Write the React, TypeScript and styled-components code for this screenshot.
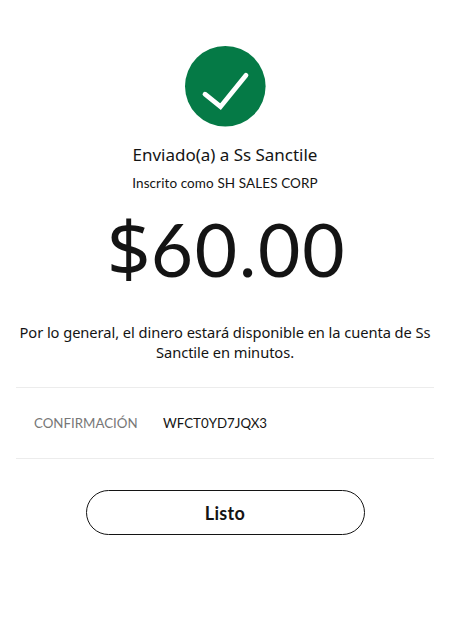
import React from 'react';
import styled, { createGlobalStyle } from 'styled-components';

const COLOR = {
  green: '#057a46',
  text: '#141414',
  gray: '#777777',
  line: '#ececec',
  bg: '#ffffff',
};

const GlobalStyle = createGlobalStyle`
  * {
    box-sizing: border-box;
    margin: 0;
    padding: 0;
  }
  body {
    background-color: ${COLOR.bg};
    color: ${COLOR.text};
    font-family: Lato, 'Noto Sans', sans-serif;
  }
`;

const PageWrapper = styled.main`
  width: 450px;
  height: 643px;
  display: flex;
  flex-direction: column;
  align-items: center;
  padding: 46px 16px 0;
  overflow: hidden;
`;

const CheckIcon = styled.svg`
  width: 81px;
  height: 81px;
  flex-shrink: 0;
`;

const Recipient = styled.h1`
  margin-top: 16px;
  font-family: 'Noto Sans', sans-serif;
  font-size: 17px;
  font-weight: 400;
  line-height: 24px;
  letter-spacing: -0.02px;
  white-space: nowrap;
`;

const Enrolled = styled.p`
  margin-top: 6px;
  font-size: 13.5px;
  line-height: 20px;
  letter-spacing: 0.1px;
  white-space: nowrap;
`;

const Amount = styled.p`
  height: 80px;
  margin-top: 15px;
  margin-left: 3px;
  display: flex;
  align-items: baseline;
  font-size: 73px;
  line-height: 80px;
  letter-spacing: 1.8px;
  white-space: nowrap;
`;

const Currency = styled.span`
  font-family: 'Noto Sans', sans-serif;
  font-size: 77px;
  letter-spacing: 0;
`;

const Notice = styled.p`
  margin-top: 34px;
  font-family: 'Noto Sans', sans-serif;
  font-size: 14.7px;
  line-height: 20px;
  letter-spacing: -0.07px;
  text-align: center;
  span {
    display: block;
    white-space: nowrap;
  }
`;

const Confirmation = styled.dl`
  width: 418px;
  height: 72px;
  margin-top: 25px;
  display: flex;
  align-items: center;
  padding-left: 18px;
  border-top: 1px solid ${COLOR.line};
  border-bottom: 1px solid ${COLOR.line};
  font-size: 13.3px;
  dt {
    width: 129px;
    color: ${COLOR.gray};
  }
`;

const DoneButton = styled.button`
  width: 279px;
  height: 45px;
  margin-top: 31px;
  border: 1px solid ${COLOR.text};
  border-radius: 23px;
  background-color: ${COLOR.bg};
  color: ${COLOR.text};
  font-family: inherit;
  font-size: 18px;
  font-weight: 700;
  letter-spacing: 0.3px;
`;

const App = () => {
  return (
    <>
      <GlobalStyle />
      <PageWrapper>
        <CheckIcon viewBox="0 0 81 81" fill="none">
          <circle cx="40.3" cy="40.3" r="40.3" fill={COLOR.green} />
          <path
            d="M20 48.2L35.5 60.7L61 29.3"
            stroke="#fff"
            strokeWidth="4.8"
            strokeLinecap="round"
            strokeLinejoin="miter"
          />
        </CheckIcon>
        <Recipient>Enviado(a) a Ss Sanctile</Recipient>
        <Enrolled>Inscrito como SH SALES CORP</Enrolled>
        <Amount>
          <Currency>$</Currency>
          60.00
        </Amount>
        <Notice>
          <span>Por lo general, el dinero estará disponible en la cuenta de Ss</span>
          <span>Sanctile en minutos.</span>
        </Notice>
        <Confirmation>
          <dt>CONFIRMACIÓN</dt>
          <dd>WFCT0YD7JQX3</dd>
        </Confirmation>
        <DoneButton type="button">Listo</DoneButton>
      </PageWrapper>
    </>
  );
};

export default App;
